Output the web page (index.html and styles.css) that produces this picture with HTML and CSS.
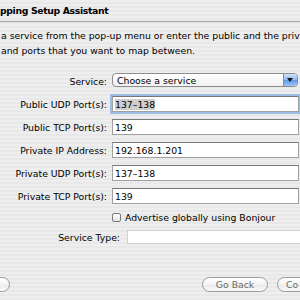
FILE: index.html
```html
<!DOCTYPE html>
<html lang="en">
<head>
    <meta charset="UTF-8">
    <title>Port Mapping Setup Assistant</title>
    <link rel="stylesheet" href="styles.css">
</head>
<body>
    <div class="sheet">
        <div class="titlebar">
            <span class="title">pping Setup Assistant</span>
        </div>
        <p class="intro">a service from the pop-up menu or enter the public and the priv<br>and ports that you want to map between.</p>

        <div class="form">
            <label class="label">Service:</label>
            <div class="popup">
                <span class="popup-text">Choose a service</span>
                <span class="popup-arrow"></span>
            </div>

            <label class="label">Public UDP Port(s):</label>
            <div class="field focused"><span class="selected">137&#8211;138</span></div>

            <label class="label">Public TCP Port(s):</label>
            <div class="field">139</div>

            <label class="label">Private IP Address:</label>
            <div class="field">192.168.1.201</div>

            <label class="label">Private UDP Port(s):</label>
            <div class="field">137&#8211;138</div>

            <label class="label">Private TCP Port(s):</label>
            <div class="field">139</div>
        </div>

        <div class="checkrow">
            <span class="checkbox"></span>
            <span>Advertise globally using Bonjour</span>
        </div>

        <div class="typerow">
            <label class="label">Service Type:</label>
            <div class="field wide"></div>
        </div>

        <div class="buttons">
            <button class="btn btn-left"></button>
            <button class="btn btn-back">Go Back</button>
            <button class="btn btn-next">Co</button>
        </div>
    </div>
</body>
</html>
```

FILE: styles.css
```css
body {
    margin: 0;
    width: 300px;
    height: 300px;
    overflow: hidden;
    font-family: "DejaVu Sans", sans-serif;
    font-size: 9.3px;
    color: #000;
    background: repeating-linear-gradient(#eeeeee 0 2px, #e8e8e8 2px 4px);
}

.sheet {
    width: 300px;
}

.titlebar {
    height: 21px;
    line-height: 21px;
    border-bottom: 1px solid #a4a4a4;
    white-space: nowrap;
}

.title {
    font-weight: bold;
    letter-spacing: -0.35px;
}

.intro {
    margin: 6px 0 0 1px;
    line-height: 15px;
    white-space: nowrap;
}

.form {
    display: grid;
    grid-template-columns: 107px 187px;
    column-gap: 5px;
    row-gap: 7px;
    margin-top: 15px;
}

.label {
    text-align: right;
    align-self: center;
    white-space: nowrap;
}

.popup {
    display: flex;
    align-items: center;
    height: 14px;
    width: 186px;
    box-sizing: border-box;
    margin-bottom: 2px;
    border: 1px solid #8c8c8c;
    border-radius: 4px;
    background: linear-gradient(#ffffff, #f1f1f1);
    overflow: hidden;
}

.popup-text {
    flex: 1;
    padding-left: 4px;
}

.popup-arrow {
    position: relative;
    width: 13px;
    height: 100%;
    border-left: 1px solid #6f8fbf;
    background: linear-gradient(#cfe2f8, #8dbaf0 50%, #5e9ae6 51%, #9cc6f5);
}

.popup-arrow::after {
    content: "";
    position: absolute;
    left: 3px;
    top: 4px;
    border-left: 3.5px solid transparent;
    border-right: 3.5px solid transparent;
    border-top: 4px solid #111;
}

.field {
    height: 16px;
    line-height: 15px;
    box-sizing: border-box;
    padding-left: 2px;
    border: 1px solid #a0a0a0;
    border-top-color: #777;
    background: #fff;
    white-space: nowrap;
}

.field.focused {
    box-shadow: 0 0 0 2px #9bbde6;
}

.selected {
    background: #cfcfcf;
}

.checkrow {
    display: flex;
    align-items: center;
    gap: 4px;
    height: 9px;
    margin: 9px 0 0 112px;
}

.checkbox {
    width: 9px;
    height: 9px;
    box-sizing: border-box;
    border: 1px solid #7a7a7a;
    border-radius: 2px;
    background: linear-gradient(#ffffff, #e4e4e4);
}

.typerow {
    display: grid;
    grid-template-columns: 120px 180px;
    column-gap: 7px;
    margin-top: 8px;
}

.field.wide {
    height: 14px;
    border-color: #d0d0d0;
}

.buttons {
    display: flex;
    margin-top: 33px;
}

.btn {
    flex-shrink: 0;
    height: 15px;
    padding: 0;
    font-family: "DejaVu Sans", sans-serif;
    font-size: 9.3px;
    color: #6a6a6a;
    border: 1px solid #9a9a9a;
    border-radius: 8px;
    background: linear-gradient(#ffffff, #f3f3f3 50%, #e9e9e9 51%, #fafafa);
}

.btn-left {
    width: 66px;
    margin-left: -56px;
}

.btn-back {
    width: 66px;
    margin-left: 192px;
}

.btn-next {
    width: 40px;
    margin-left: 9px;
    text-align: left;
    padding-left: 8px;
}
```
